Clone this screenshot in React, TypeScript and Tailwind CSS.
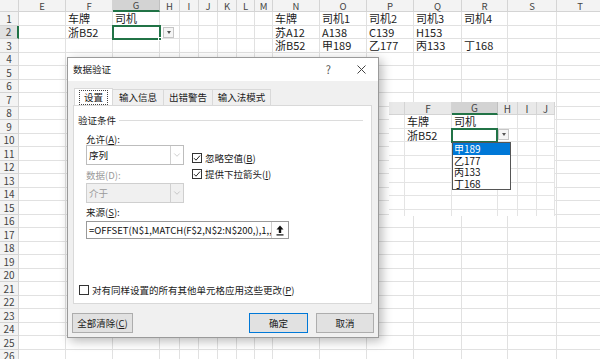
import { ChevronDown } from "lucide-react";

const COLS: [string, string][] = [
  ["E", "w-[47px]"],
  ["F", "w-[47px]"],
  ["G", "w-[47px]"],
  ["H", "w-[20px]"],
  ["I", "w-[19px]"],
  ["J", "w-[19px]"],
  ["K", "w-[19px]"],
  ["L", "w-[18px]"],
  ["M", "w-[18px]"],
  ["N", "w-[47px]"],
  ["O", "w-[47px]"],
  ["P", "w-[47px]"],
  ["Q", "w-[48px]"],
  ["R", "w-[46px]"],
  ["S", "w-[49px]"],
  ["T", "w-[47px]"],
];

const DATA: Record<number, Record<string, string>> = {
  1: { F: "车牌", G: "司机", N: "车牌", O: "司机1", P: "司机2", Q: "司机3", R: "司机4" },
  2: { F: "浙B52", N: "苏A12", O: "A138", P: "C139", Q: "H153" },
  3: { N: "浙B52", O: "甲189", P: "乙177", Q: "丙133", R: "丁168" },
};

const ROWS = Array.from({ length: 26 }, (_, i) => i + 1);

const MINI_COLS: [string, string][] = [
  ["", "w-[16px]"],
  ["F", "w-[47px]"],
  ["G", "w-[46px]"],
  ["H", "w-[20px]"],
  ["I", "w-[19px]"],
  ["J", "w-[18px]"],
];

const MINI_DATA: Record<number, Record<string, string>> = {
  0: { F: "车牌", G: "司机" },
  1: { F: "浙B52" },
};

function DropArrow() {
  return (
    <div className="w-[11px] h-[11px] border border-[#c6c6c6] bg-[#f5f5f5] flex items-center justify-center">
      <div className="w-0 h-0 border-l-[2.5px] border-r-[2.5px] border-t-[3px] border-l-transparent border-r-transparent border-t-[#555]" />
    </div>
  );
}

function Sheet() {
  return (
    <div className="flex flex-col">
      <div className="flex h-[12px]">
        <div className="w-[19px] shrink-0 bg-[#f3f3f3] border-r border-b border-[#d4d4d4]" />
        {COLS.map(([name, w]) => (
          <div
            key={name}
            className={`${w} shrink-0 flex items-center justify-center text-[9.5px] leading-[10px] text-[#444] border-r ${
              name === "G"
                ? "bg-[#d3d3d3] border-b-2 border-b-[#217346] border-r-[#c0c0c0]"
                : "bg-[#f3f3f3] border-b border-[#d4d4d4]"
            }`}
          >
            {name}
          </div>
        ))}
      </div>
      {ROWS.map((r) => (
        <div key={r} className="flex h-[13.5px]">
          <div
            className={`w-[19px] shrink-0 flex items-center justify-center text-[10px] leading-[11px] text-[#444] border-b border-[#d4d4d4] ${
              r === 2 ? "bg-[#e1e1e1] border-r-2 border-r-[#217346]" : "bg-[#f3f3f3] border-r"
            }`}
          >
            {r}
          </div>
          {COLS.map(([name, w]) => (
            <div
              key={name}
              className={`${w} shrink-0 flex items-center pl-[2px] text-[11px] leading-[12px] text-[#222] whitespace-nowrap overflow-hidden border-r border-b border-[#e1e1e1]`}
            >
              {DATA[r]?.[name] ?? ""}
            </div>
          ))}
        </div>
      ))}
    </div>
  );
}

function MiniPicture() {
  return (
    <div className="absolute left-[389px] top-[102px] w-[166px] h-[114px] bg-white overflow-hidden">
      <div className="flex h-[13px]">
        {MINI_COLS.map(([name, w], i) => (
          <div
            key={i}
            className={`${w} shrink-0 flex items-center justify-center text-[10px] leading-[11px] text-[#444] border-r ${
              name === "G"
                ? "bg-[#d3d3d3] border-b-2 border-b-[#217346] border-r-[#c0c0c0]"
                : "bg-[#e9e9e9] border-b border-[#d4d4d4]"
            }`}
          >
            {name}
          </div>
        ))}
      </div>
      {Array.from({ length: 8 }, (_, r) => (
        <div key={r} className="flex h-[13.5px]">
          {MINI_COLS.map(([name, w], i) => (
            <div
              key={i}
              className={`${w} shrink-0 flex items-center pl-[2px] text-[11px] leading-[12px] text-[#222] whitespace-nowrap border-r border-b border-[#e4e4e4]`}
            >
              {MINI_DATA[r]?.[name] ?? ""}
            </div>
          ))}
        </div>
      ))}
      <div className="absolute left-[62px] top-[26px] w-[47px] h-[14.5px] border-2 border-[#217346]" />
      <div className="absolute left-[109px] top-[27px]">
        <DropArrow />
      </div>
      <div className="absolute left-[63px] top-[40px] w-[59px] h-[48px] bg-white border border-[#555] flex flex-col text-[10px] text-[#111]">
        {["甲189", "乙177", "丙133", "丁168"].map((t, i) => (
          <div
            key={t}
            className={`h-[11.5px] leading-[11.5px] pl-[1px] overflow-hidden ${i === 0 ? "bg-[#0078d7] text-white" : ""}`}
          >
            {t}
          </div>
        ))}
      </div>
    </div>
  );
}

function CheckBox({ checked }: { checked?: boolean }) {
  return (
    <div className="w-[10px] h-[10px] shrink-0 border border-[#333] bg-white flex items-center justify-center">
      {checked && (
        <svg width="8" height="8" viewBox="0 0 8 8">
          <path d="M1 4.2 L3 6.2 L7 1.6" fill="none" stroke="#222" strokeWidth="1" />
        </svg>
      )}
    </div>
  );
}

function Select({ value, disabled }: { value: string; disabled?: boolean }) {
  return (
    <div
      className={`w-[98px] h-[20px] flex border ${
        disabled ? "border-[#cfcfcf] bg-[#f0f0f0] text-[#9a9a9a]" : "border-[#bdbdbd] bg-white text-[#111]"
      }`}
    >
      <div className="flex-1 flex items-center pl-[2px]">{value}</div>
      <div className="w-[13px] flex items-center justify-center border-l border-[#d0d0d0]">
        <ChevronDown size={10} strokeWidth={1} color="#8a8a8a" />
      </div>
    </div>
  );
}

function Dialog() {
  return (
    <div className="absolute left-[67px] top-[57px] w-[312px] h-[281px] bg-[#f0f0f0] border border-[#9a9a9a] shadow-[3px_3px_10px_rgba(0,0,0,0.28)] flex flex-col text-[9.5px] leading-[11px] text-[#1a1a1a]">
      <div className="h-[23px] bg-white flex items-center pl-[5px] pr-[12px]">
        <span>数据验证</span>
        <span className="ml-auto text-[11px] text-[#555]">?</span>
        <svg className="ml-[26px]" width="9" height="9" viewBox="0 0 9 9">
          <path d="M0.5 0.5 L8.5 8.5 M8.5 0.5 L0.5 8.5" stroke="#444" strokeWidth="1" />
        </svg>
      </div>

      <div className="flex pl-[6px] pt-[7px]">
        <div className="w-[39px] h-[17px] -mb-px relative z-10 bg-white border border-b-0 border-[#d9d9d9] flex items-center justify-center">
          <span className="px-[4px] py-[1px] border border-dotted border-[#444]">设置</span>
        </div>
        <div className="w-[51px] h-[16px] mt-[1px] border border-l-0 border-b-0 border-[#d9d9d9] flex items-center justify-center">
          输入信息
        </div>
        <div className="w-[49px] h-[16px] mt-[1px] border border-l-0 border-b-0 border-[#d9d9d9] flex items-center justify-center">
          出错警告
        </div>
        <div className="w-[58px] h-[16px] mt-[1px] border border-l-0 border-b-0 border-[#d9d9d9] flex items-center justify-center">
          输入法模式
        </div>
      </div>

      <div className="ml-[5px] mr-[6px] h-[199px] bg-white border border-[#d9d9d9] flex flex-col pt-[8px] pb-[7px]">
        <div className="h-[12px] flex items-center pl-[4px] pr-[8px] gap-[3px]">
          <span>验证条件</span>
          <div className="flex-1 h-px bg-[#dcdcdc]" />
        </div>

        <div className="pl-[12px] mt-[7px] flex flex-col">
          <div className="h-[12px] flex items-center">
            允许(<span className="underline">A</span>):
          </div>
          <div className="flex items-start gap-[8px]">
            <div className="flex flex-col">
              <Select value="序列" />
              <div className="h-[12px] mt-[4px] flex items-center text-[#9a9a9a]">数据(D):</div>
              <div className="mt-[2px]">
                <Select value="介于" disabled />
              </div>
            </div>
            <div className="flex flex-col gap-[4px] mt-[7px]">
              <div className="h-[12px] flex items-center gap-[3px]">
                <CheckBox checked />
                <span>
                  忽略空值(<span className="underline">B</span>)
                </span>
              </div>
              <div className="h-[12px] flex items-center gap-[3px]">
                <CheckBox checked />
                <span>
                  提供下拉箭头(<span className="underline">I</span>)
                </span>
              </div>
            </div>
          </div>
          <div className="h-[12px] mt-[3px] flex items-center">
            来源(<span className="underline">S</span>):
          </div>
          <div className="mt-[3px] w-[203px] h-[18px] flex border border-[#9a9a9a] bg-white">
            <div className="flex-1 flex items-center pl-[2px] whitespace-nowrap overflow-hidden text-[9.5px] text-[#111]">
              =OFFSET(N$1,MATCH(F$2,N$2:N$200,),1,,
            </div>
            <div className="w-[17px] flex items-center justify-center border-l border-[#cfcfcf]">
              <svg width="8" height="11" viewBox="0 0 8 11">
                <path d="M4 0.5 L7.5 4.5 L5.2 4.5 L5.2 8 L2.8 8 L2.8 4.5 L0.5 4.5 Z" fill="#111" />
                <rect x="0.5" y="9.3" width="7" height="1.2" fill="#111" />
              </svg>
            </div>
          </div>
        </div>

        <div className="mt-auto h-[12px] pl-[5px] flex items-center gap-[3px]">
          <CheckBox />
          <span>
            对有同样设置的所有其他单元格应用这些更改(<span className="underline">P</span>)
          </span>
        </div>
      </div>

      <div className="flex items-center mt-[9px] px-[4px]">
        <div className="w-[61px] h-[20px] bg-[#e1e1e1] border border-[#adadad] flex items-center justify-center">
          全部清除(<span className="underline">C</span>)
        </div>
        <div className="ml-auto w-[59px] h-[20px] bg-[#e1e1e1] border border-[#0078d7] flex items-center justify-center">
          确定
        </div>
        <div className="ml-[8px] w-[58px] h-[20px] bg-[#e1e1e1] border border-[#adadad] flex items-center justify-center">
          取消
        </div>
      </div>
    </div>
  );
}

export default function App() {
  return (
    <div
      className="relative w-[600px] h-[359px] overflow-hidden bg-white"
      style={{ fontFamily: '"Noto Sans CJK SC", "Noto Sans", sans-serif' }}
    >
      <Sheet />

      <div className="absolute left-[112px] top-[24.5px] w-[49px] h-[15.5px] border-2 border-[#217346]" />
      <div className="absolute left-[158px] top-[37px] w-[4px] h-[4px] bg-[#217346] border border-white" />
      <div className="absolute left-[163px] top-[27px]">
        <DropArrow />
      </div>

      <MiniPicture />
      <Dialog />
    </div>
  );
}
